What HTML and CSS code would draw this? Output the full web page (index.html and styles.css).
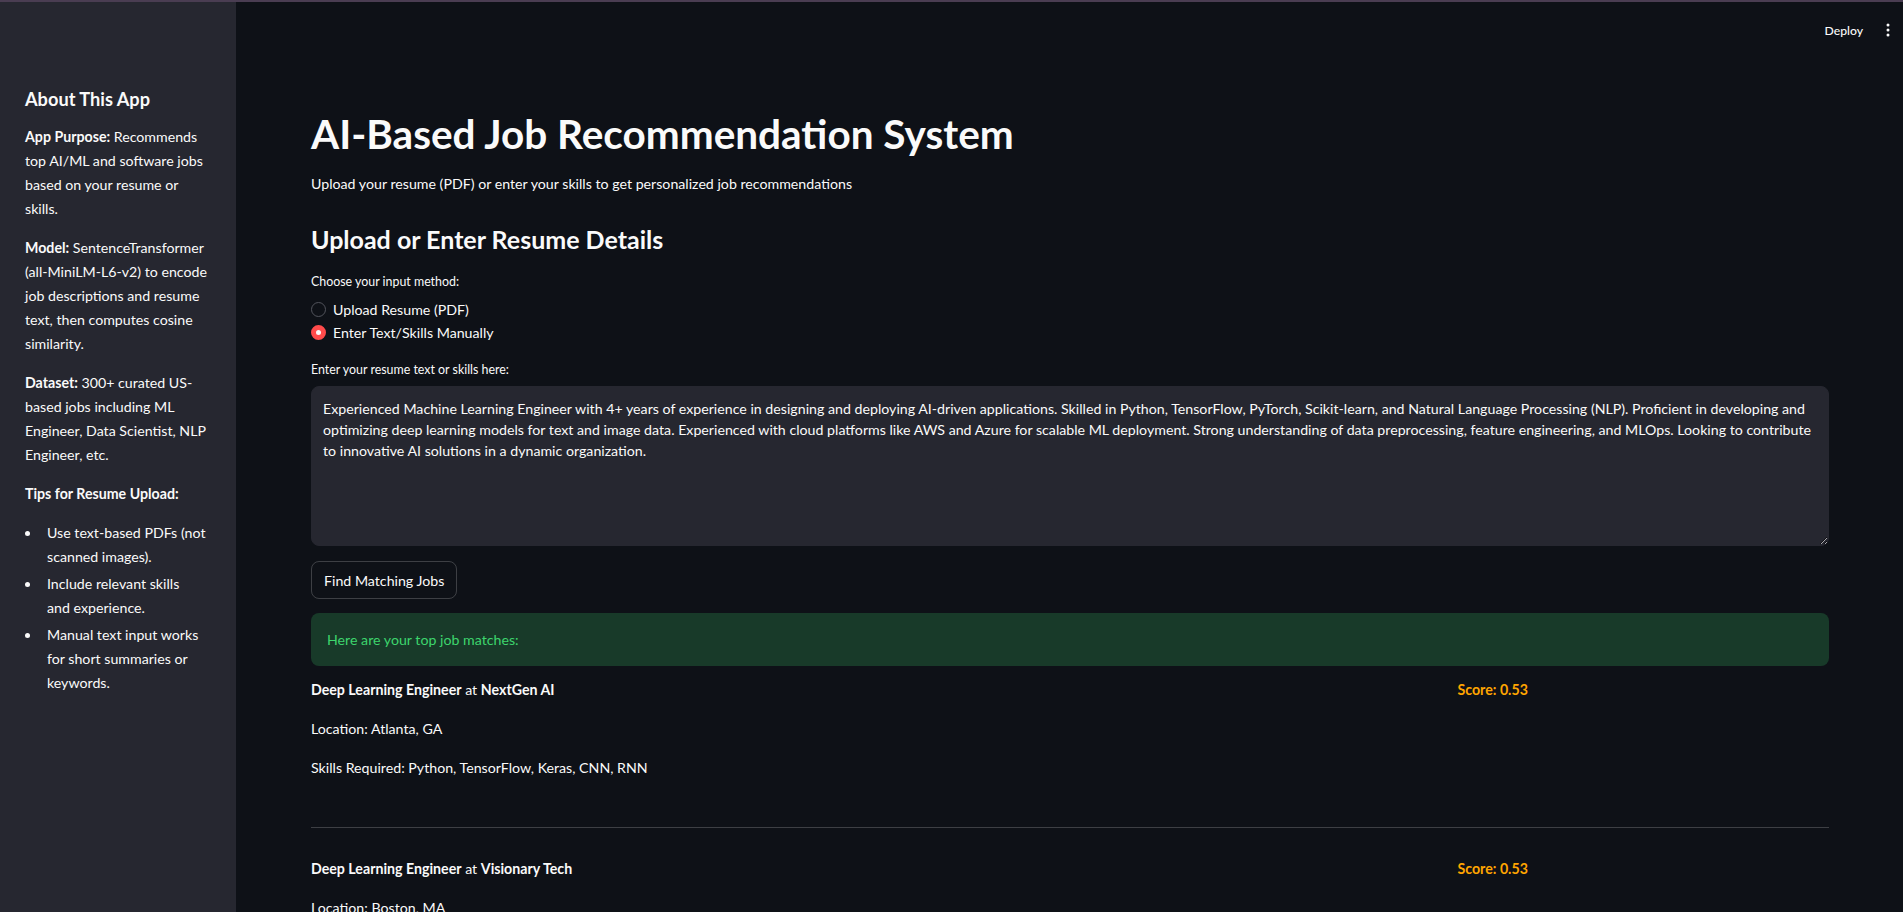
FILE: index.html
```html
<!DOCTYPE html>
<html lang="en">
<head>
<meta charset="utf-8">
<title>AI-Based Job Recommendation System</title>
<link rel="stylesheet" href="styles.css">
</head>
<body>
<div class="topline"></div>
<div class="app">
  <aside class="sidebar">
    <h3 class="side-title">About This App</h3>
    <p><strong>App Purpose:</strong> Recommends<br>top AI/ML and software jobs<br>based on your resume or<br>skills.</p>
    <p><strong>Model:</strong> SentenceTransformer<br>(all-MiniLM-L6-v2) to encode<br>job descriptions and resume<br>text, then computes cosine<br>similarity.</p>
    <p><strong>Dataset:</strong> 300+ curated US-<br>based jobs including ML<br>Engineer, Data Scientist, NLP<br>Engineer, etc.</p>
    <p><strong>Tips for Resume Upload:</strong></p>
    <ul class="tips">
      <li><span>Use text-based PDFs (not<br>scanned images).</span></li>
      <li><span>Include relevant skills<br>and experience.</span></li>
      <li><span>Manual text input works<br>for short summaries or<br>keywords.</span></li>
    </ul>
  </aside>
  <main class="main">
    <header class="toolbar">
      <span class="deploy">Deploy</span>
      <svg class="kebab" width="4" height="14" viewBox="0 0 4 14"><circle cx="2" cy="2" r="1.5" fill="#fafafa"/><circle cx="2" cy="7" r="1.5" fill="#fafafa"/><circle cx="2" cy="12" r="1.5" fill="#fafafa"/></svg>
    </header>
    <div class="content">
      <h1 class="title">AI-Based Job Recommendation System</h1>
      <p class="subtitle">Upload your resume (PDF) or enter your skills to get personalized job recommendations</p>
      <h2 class="section-title">Upload or Enter Resume Details</h2>
      <div class="label label-radio">Choose your input method:</div>
      <div class="radio-group">
        <label class="radio"><span class="radio-dot"></span>Upload Resume (PDF)</label>
        <label class="radio radio-selected"><span class="radio-dot"></span>Enter Text/Skills Manually</label>
      </div>
      <div class="label label-text">Enter your resume text or skills here:</div>
      <textarea class="resume-input">Experienced Machine Learning Engineer with 4+ years of experience in designing and deploying AI-driven applications. Skilled in Python, TensorFlow, PyTorch, Scikit-learn, and Natural Language Processing (NLP). Proficient in developing and
optimizing deep learning models for text and image data. Experienced with cloud platforms like AWS and Azure for scalable ML deployment. Strong understanding of data preprocessing, feature engineering, and MLOps. Looking to contribute
to innovative AI solutions in a dynamic organization.</textarea>
      <button class="btn">Find Matching Jobs</button>
      <div class="alert-success">Here are your top job matches:</div>
      <div class="job job-first">
        <div class="job-main">
          <p><strong>Deep Learning Engineer</strong> at <strong>NextGen AI</strong></p>
          <p>Location: Atlanta, GA</p>
          <p>Skills Required: Python, TensorFlow, Keras, CNN, RNN</p>
        </div>
        <div class="job-side">
          <p class="score">Score: 0.53</p>
        </div>
      </div>
      <hr class="divider">
      <div class="job job-next">
        <div class="job-main">
          <p><strong>Deep Learning Engineer</strong> at <strong>Visionary Tech</strong></p>
          <p>Location: Boston, MA</p>
          <p>Skills Required: Python, PyTorch, OpenCV, CNN</p>
        </div>
        <div class="job-side">
          <p class="score">Score: 0.53</p>
        </div>
      </div>
    </div>
  </main>
</div>
</body>
</html>
```

FILE: styles.css
```css
* { box-sizing: border-box; }
html, body { margin: 0; height: 100%; }
body {
  background: #0e1117;
  color: #fafafa;
  font-family: Lato, "Liberation Sans", sans-serif;
  overflow: hidden;
}
.topline { height: 2px; background: #4a3d52; }
.app { display: flex; height: 910px; }

.sidebar {
  width: 236px;
  flex: none;
  background: #262730;
  padding: 85px 10px 0 25px;
  font-size: 14.2px;
  line-height: 24px;
}
.side-title { margin: 0 0 14px; font-size: 18.2px; line-height: 24px; font-weight: 700; }
.sidebar p { margin: 0 0 15px; }
.sidebar strong { font-weight: 700; }
.tips { list-style: none; margin: 0; padding: 0; }
.tips li { display: flex; align-items: flex-start; margin-bottom: 3px; }
.tips li::before {
  content: "";
  flex: none;
  width: 5px;
  height: 5px;
  margin: 10px 17px 0 0;
  border-radius: 50%;
  background: #fafafa;
}

.main { flex: 1; min-width: 0; display: flex; flex-direction: column; }
.toolbar {
  height: 56px;
  flex: none;
  display: flex;
  justify-content: flex-end;
  align-items: center;
  gap: 23px;
  padding-right: 13px;
}
.deploy { font-size: 12.2px; font-weight: 500; }
.kebab { display: block; }

.content {
  padding: 51px 74px 0 75px;
  display: flex;
  flex-direction: column;
  font-size: 14.2px;
  line-height: 24px;
}
.title { margin: 0; font-size: 40.5px; line-height: 49px; font-weight: 700; }
.subtitle { margin: 14px 0 0; }
.section-title { margin: 27px 0 0; font-size: 25px; line-height: 32px; font-weight: 700; }
.label { font-size: 12.4px; line-height: 21px; }
.label-radio { margin-top: 16px; }
.label-text { margin-top: 15px; }
.radio-group { margin-top: 6px; display: flex; flex-direction: column; }
.radio { display: flex; align-items: center; height: 23px; font-size: 14.2px; }
.radio-dot {
  width: 15px; height: 15px; flex: none;
  border-radius: 50%;
  border: 1px solid #52545c;
  margin-right: 7px;
}
.radio-selected .radio-dot { border: 5px solid #ff4b4b; background: #fafafa; }

.resume-input {
  margin-top: 6px;
  width: 100%;
  height: 160px;
  background: #262730;
  border: 1px solid #262730;
  border-radius: 8px;
  padding: 11px 11px;
  color: #fafafa;
  font-family: inherit;
  font-size: 14.2px;
  line-height: 21px;
  resize: vertical;
  color-scheme: dark;
  outline: none;
}
.btn {
  margin-top: 15px;
  align-self: flex-start;
  height: 38px;
  padding: 0 12px;
  background: transparent;
  border: 1px solid rgba(250, 250, 250, 0.2);
  border-radius: 8px;
  color: #fafafa;
  font-family: inherit;
  font-size: 14.2px;
}
.alert-success {
  margin-top: 14px;
  height: 53px;
  display: flex;
  align-items: center;
  padding: 0 16px;
  background: #183a29;
  border-radius: 8px;
  color: #3dd56d;
}
.job { display: grid; grid-template-columns: 3fr 1fr; gap: 32px; }
.job p { margin: 0 0 15px; }
.job p:last-child { margin-bottom: 0; }
.job strong { font-weight: 700; }
.job-first { margin-top: 12px; }
.job-next { margin-top: 29px; }
.score { font-weight: 700; color: #ffa500; }
.divider { margin: 47px 0 0; border: none; height: 1px; background: rgba(250, 250, 250, 0.2); }
```
